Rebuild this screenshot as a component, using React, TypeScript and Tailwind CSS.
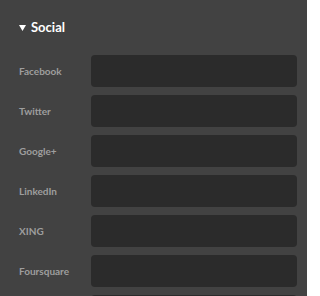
const fields = ["Facebook", "Twitter", "Google+", "LinkedIn", "XING", "Foursquare", ""];

export default function App() {
  return (
    <div
      className="w-[307px] h-[296px] overflow-hidden bg-[#424242] pl-[19px] pr-[10px] pt-[19px]"
      style={{ fontFamily: 'Lato, "Liberation Sans", sans-serif' }}
    >
      {/* Section header */}
      <div className="flex items-center h-[17px] text-white">
        <svg width="7" height="6" viewBox="0 0 7 6" className="mr-[5px] mt-[1px]">
          <path d="M0 0H7L3.5 6Z" fill="white" />
        </svg>
        <span className="text-[13px] font-bold leading-none">Social</span>
      </div>

      {/* Fields */}
      <div className="mt-[19px] flex flex-col gap-2">
        {fields.map((f, i) => (
          <div key={i} className="flex items-center h-8">
            <label className="w-[72px] shrink-0 text-[10px] font-bold text-[#9e9e9e]">{f}</label>
            <div className="flex-1 h-8 rounded-[4px] bg-[#2b2b2b]" />
          </div>
        ))}
      </div>
    </div>
  );
}
